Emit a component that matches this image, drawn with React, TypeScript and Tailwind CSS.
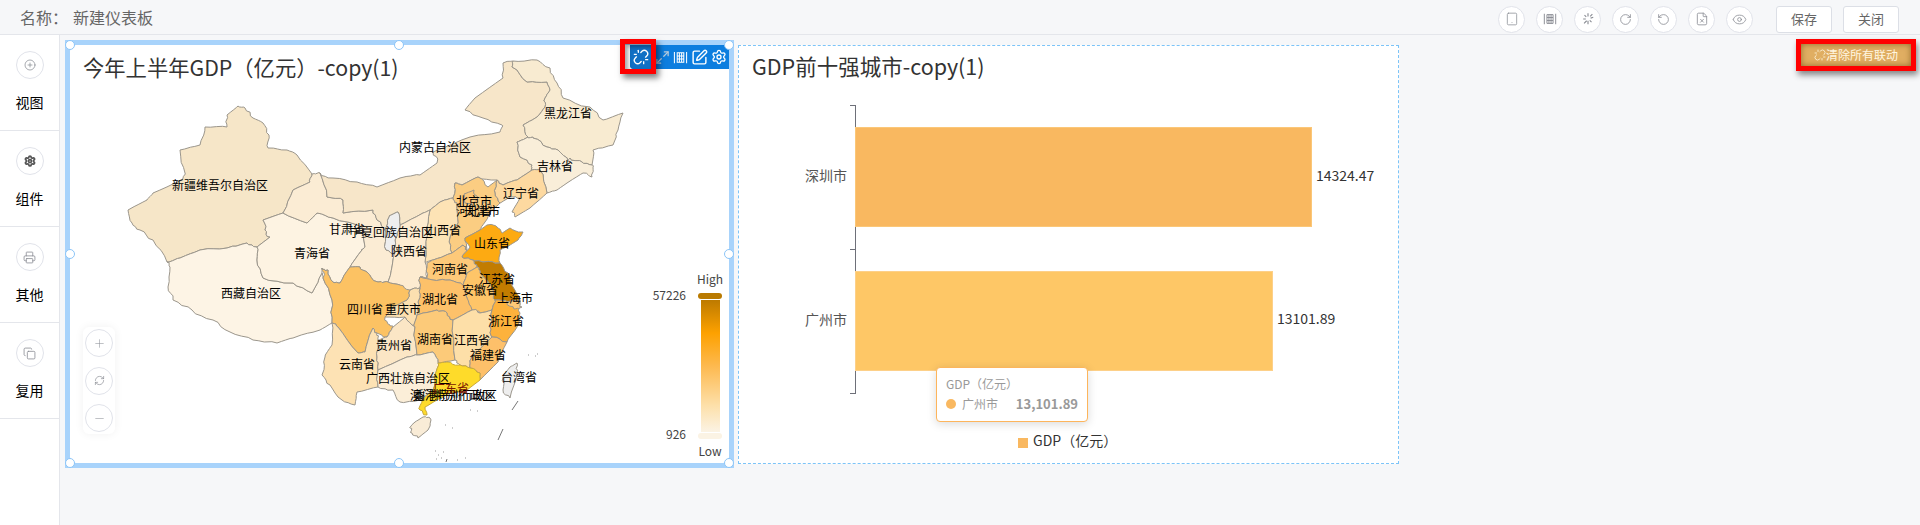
import React from 'react';
import {
  CirclePlus,
  Copy,
  Eye,
  FileX,
  Maximize2,
  Minus,
  Plus,
  Printer,
  RefreshCw,
  RotateCcw,
  RotateCw,
  Settings,
  SquarePen,
  Tablet,
  Unlink,
} from 'lucide-react';

type Region = { color: string; points: number[][]; stroke?: string };

const regions: Region[] = [
  { color: '#f6e6c8', points: [[238,106],[245,108],[253,118],[263,123],[269,135],[268,148],[287,150],[297,155],[312,174],[310,182],[293,190],[283,213],[263,220],[265,230],[270,237],[257,247],[247,243],[227,248],[200,250],[180,258],[167,262],[153,240],[140,230],[132,223],[128,210],[147,200],[153,193],[182,180],[185,173],[180,150],[200,145],[205,127],[227,127],[227,115]] },
  { color: '#fdf4e5', points: [[167,262],[180,258],[200,250],[227,248],[247,243],[257,247],[257,260],[263,278],[293,283],[312,293],[322,273],[323,278],[332,300],[332,323],[320,330],[293,338],[277,343],[253,340],[230,332],[213,320],[192,310],[173,300],[168,287],[170,267]] },
  { color: '#fdf3e2', points: [[263,220],[283,213],[307,223],[317,213],[333,218],[362,227],[365,247],[362,250],[350,267],[340,283],[333,282],[328,270],[322,268],[322,273],[312,293],[293,283],[263,278],[257,260],[257,247],[270,237],[265,230]] },
  { color: '#fbecd4', points: [[312,174],[320,173],[327,197],[343,200],[343,213],[373,210],[377,220],[386,232],[386,250],[394,255],[393,260],[388,282],[378,282],[367,272],[360,267],[350,267],[362,250],[365,247],[362,227],[333,218],[317,213],[307,223],[283,213],[293,190],[310,182]] },
  { color: '#f7e6c9', points: [[320,173],[333,178],[357,182],[377,187],[400,178],[420,175],[437,163],[433,152],[470,137],[500,132],[502,125],[483,118],[465,110],[475,98],[503,78],[503,63],[513,61],[512,67],[527,82],[547,82],[550,90],[545,98],[545,107],[537,117],[523,125],[528,137],[517,142],[520,157],[532,165],[532,170],[517,180],[503,185],[497,180],[478,177],[462,185],[455,183],[453,198],[440,202],[430,210],[423,213],[400,225],[398,212],[390,215],[386,232],[377,220],[373,210],[343,213],[343,200],[327,197]] },
  { color: '#f8ebd1', points: [[513,61],[537,60],[550,68],[557,83],[563,98],[590,107],[603,120],[623,113],[618,130],[613,145],[593,150],[592,165],[582,162],[570,158],[568,162],[558,150],[547,147],[533,138],[528,137],[523,125],[537,117],[545,107],[545,98],[550,90],[547,82],[527,82],[512,67]] },
  { color: '#f9eed9', points: [[528,137],[533,138],[547,147],[558,150],[568,162],[570,158],[582,162],[592,165],[593,167],[592,177],[583,173],[567,183],[557,190],[547,193],[540,170],[532,170],[532,165],[520,157],[517,142]] },
  { color: '#fdd9a0', points: [[540,170],[547,193],[530,208],[515,217],[512,212],[520,198],[510,197],[500,203],[495,193],[497,180],[503,185],[517,180],[532,170]] },
  { color: '#fbcd82', points: [[455,183],[462,185],[478,177],[488,187],[497,180],[495,193],[500,203],[490,212],[485,222],[480,230],[465,238],[467,250],[463,245],[452,253],[450,237],[458,223],[457,203],[453,198]] },
  { color: '#fdc878', points: [[464,194],[474,190],[478,198],[472,205],[465,203]] },
  { color: '#fdc878', points: [[483,202],[490,204],[490,212],[485,215],[481,210]] },
  { color: '#fde3b5', points: [[430,210],[440,202],[453,198],[457,203],[458,223],[450,237],[452,253],[433,260],[425,262],[428,233]] },
  { color: '#fdebd0', points: [[400,225],[423,213],[430,210],[428,233],[425,262],[427,278],[420,277],[420,288],[410,290],[407,300],[400,285],[388,282],[393,260],[394,255],[395,240]] },
  { color: '#eeeeee', points: [[390,215],[398,212],[400,225],[395,240],[394,255],[386,250],[386,232]] },
  { color: '#fdaa12', points: [[462,257],[470,247],[465,238],[480,230],[487,225],[497,227],[502,233],[510,228],[523,232],[518,240],[507,247],[500,250],[500,263],[483,262],[473,260]] },
  { color: '#c27c00', points: [[473,260],[483,262],[500,263],[508,273],[513,287],[520,300],[507,302],[495,300],[493,290],[480,273],[477,267]] },
  { color: '#fdc979', points: [[427,263],[433,260],[452,253],[463,245],[467,250],[462,257],[473,260],[477,267],[467,273],[463,285],[450,280],[433,280],[420,277],[427,278]] },
  { color: '#fec568', points: [[477,267],[480,273],[493,290],[495,300],[492,310],[480,313],[470,310],[467,298],[463,285],[467,273]] },
  { color: '#fdc16a', points: [[420,277],[433,280],[450,280],[463,285],[467,298],[472,310],[453,320],[447,313],[437,310],[417,315],[418,302],[420,288]] },
  { color: '#fce0b0', points: [[410,290],[420,288],[418,302],[417,315],[415,327],[405,317],[385,317],[393,307],[407,300]] },
  { color: '#fcc263', points: [[322,268],[328,270],[333,282],[340,283],[350,267],[360,267],[367,272],[378,282],[388,282],[400,285],[410,290],[407,300],[393,307],[385,317],[390,325],[392,328],[387,337],[377,333],[373,328],[365,352],[358,353],[338,327],[332,323],[332,300],[323,278]] },
  { color: '#fde2b4', points: [[332,323],[338,327],[358,353],[365,352],[373,328],[377,333],[378,340],[377,357],[378,370],[378,387],[357,392],[355,405],[342,400],[330,385],[322,375],[325,357],[332,345]] },
  { color: '#fbe6c5', points: [[378,340],[387,337],[392,328],[405,317],[415,327],[417,355],[407,357],[378,370],[377,357]] },
  { color: '#fcca79', points: [[417,315],[437,310],[447,313],[453,320],[455,360],[438,363],[433,352],[417,355],[415,327]] },
  { color: '#fddfa8', points: [[453,320],[472,310],[480,313],[492,310],[490,327],[492,337],[472,357],[470,368],[460,365],[455,360]] },
  { color: '#fdb23c', points: [[492,310],[495,300],[507,302],[520,300],[520,313],[517,327],[507,342],[492,337],[490,327]] },
  { color: '#fdc877', points: [[507,302],[520,300],[522,307],[514,309]] },
  { color: '#fdc06a', points: [[492,337],[507,342],[498,362],[480,380],[480,373],[470,368],[472,357]] },
  { color: '#fbeed8', points: [[378,370],[407,357],[417,355],[433,352],[438,363],[435,375],[433,390],[420,400],[400,402],[393,390],[378,387]] },
  { color: '#fedb2a', stroke: '#c9a93a', points: [[438,363],[447,362],[460,365],[470,368],[480,373],[480,380],[467,390],[450,393],[437,400],[425,407],[427,415],[420,410],[422,400],[433,390],[435,375]] },
  { color: '#f9ecd7', points: [[415,422],[423,417],[430,418],[428,430],[418,438],[412,433],[410,428]] },
  { color: '#eeeeee', points: [[510,367],[517,363],[517,373],[510,398],[503,390],[503,377]] },
];

const labels: [string, number, number][] = [
  ['新疆维吾尔自治区', 220, 184],
  ['甘肃省', 347, 228],
  ['宁夏回族自治区', 391, 231],
  ['青海省', 312, 252],
  ['西藏自治区', 251, 292],
  ['内蒙古自治区', 435, 146],
  ['黑龙江省', 568, 112],
  ['吉林省', 555, 165],
  ['辽宁省', 521, 192],
  ['北京市', 474, 200],
  ['河北省', 474, 210],
  ['天津市', 482, 210],
  ['山西省', 443, 229],
  ['陕西省', 409, 250],
  ['山东省', 492, 242],
  ['河南省', 450, 268],
  ['江苏省', 497, 278],
  ['安徽省', 480, 289],
  ['上海市', 515, 297],
  ['湖北省', 440, 298],
  ['四川省', 365, 308],
  ['重庆市', 403, 308],
  ['浙江省', 506, 320],
  ['湖南省', 435, 338],
  ['江西省', 472, 339],
  ['贵州省', 394, 344],
  ['福建省', 488, 354],
  ['云南省', 357, 363],
  ['广西壮族自治区', 408, 377],
  ['台湾省', 519, 376],
  ['澳门特别行政区', 452, 394],
  ['香港特别行政区', 455, 394],
];

// rough coastline look: midpoint noise keyed on position, so shared borders stay shared
const wobble = (a: number[], b: number[], depth: number): number[][] => {
  if (depth === 0) return [a];
  const mx = (a[0] + b[0]) / 2;
  const my = (a[1] + b[1]) / 2;
  const h = Math.sin(mx * 12.9898 + my * 78.233) * 43758.5453;
  const n = (h - Math.floor(h) - 0.5) * 2.6;
  const m = [mx + n, my - n * 0.7];
  return [...wobble(a, m, depth - 1), ...wobble(m, b, depth - 1)];
};

const toPath = (points: number[][]) =>
  points
    .flatMap((p, i) => wobble(p, points[(i + 1) % points.length], 2))
    .map((p) => `${p[0].toFixed(1)},${p[1].toFixed(1)}`)
    .join(' ');

const CircleIcon = ({ children, className = 'w-7 h-7' }: { children: React.ReactNode; className?: string }) => (
  <div className={`${className} flex items-center justify-center rounded-full border border-[#e1e3ea] bg-white text-[#8a8d94]`}>
    {children}
  </div>
);

const GridIcon = ({ size = 14 }: { size?: number }) => (
  <svg width={size} height={size} viewBox="0 0 16 16" stroke="currentColor" strokeWidth="1.1" fill="none">
    <path d="M1.5 2v12M14.5 2v12M4.5 3h7v10h-7zM4.5 6.3h7M4.5 9.7h7M6.8 3v10M9.2 3v10" />
  </svg>
);

const BurstIcon = () => (
  <svg width="14" height="14" viewBox="0 0 16 16" stroke="currentColor" strokeWidth="1.3" fill="none">
    <path d="M8 1.5v3.5M8 10v4M2.5 8h3M11 7l3-1M4 3.5l2 2M12 11.5l-2-2M3.5 13l3-3M10.5 5l2.5-2.5" />
  </svg>
);

const sideItems = [
  { label: '视图', icon: <CirclePlus size={12} strokeWidth={1.5} /> },
  { label: '组件', icon: <Settings size={12} strokeWidth={3.5} className="text-[#555]" /> },
  { label: '其他', icon: <Printer size={13} strokeWidth={1.5} /> },
  { label: '复用', icon: <Copy size={13} strokeWidth={1.5} /> },
];

const Handle = ({ className }: { className: string }) => (
  <span className={`absolute z-20 h-2.5 w-2.5 rounded-full border border-[#8cc5f8] bg-white ${className}`} />
);

const ChinaMap = () => (
  <svg className="absolute inset-0" width="659" height="418" viewBox="70 45 659 418">
    {regions.map((r, i) => (
      <polygon key={i} points={toPath(r.points)} fill={r.color} stroke={r.stroke ?? '#9b968c'} strokeWidth="1" strokeLinejoin="round" />
    ))}
    <path d="M512 410l6-9M498 440l5-11M446 462l1-3" stroke="#777" strokeWidth="1" />
    <path d="M528 355h1M535 356h1M537 354h1M470 410h1M477 411h1M445 425h1M452 428h1M435 451h1M438 455h1M441 458h1M436 459h1M443 452h1M457 460h1M465 458h1" stroke="#999" strokeWidth="1" />
    <g fontSize="12" fill="#000" textAnchor="middle" dominantBaseline="central">
      {labels.map(([t, x, y]) => (
        <text key={t} x={x} y={y}>{t}</text>
      ))}
      <text x="451" y="387" fill="#7a1500">广东省</text>
    </g>
  </svg>
);

const MapLegend = () => (
  <>
    <span className="absolute left-[617px] top-[226px] w-[46px] text-center text-xs leading-4 text-[#444]">High</span>
    <span className="absolute right-[43px] top-[242px] text-xs leading-4 text-[#444]">57226</span>
    <div className="absolute left-[628px] top-[248px] h-[6px] w-6 rounded-full bg-[#b97a00]" />
    <div className="absolute left-[631px] top-[255px] h-[132px] w-[19px] bg-[linear-gradient(to_bottom,#bd7a00,#fda100_25%,#fdb94f_50%,#fde0aa_80%,#fbf3e4)]" />
    <div className="absolute left-[628px] top-[388px] h-[6px] w-6 rounded-full bg-[#fbf3e4]" />
    <span className="absolute right-[43px] top-[381px] text-xs leading-4 text-[#444]">926</span>
    <span className="absolute left-[617px] top-[398px] w-[46px] text-center text-xs leading-4 text-[#444]">Low</span>
  </>
);

const BarChart = () => (
  <svg className="absolute inset-0" width="659" height="417" viewBox="739 46 659 417">
    <path d="M850 105.5h5M850 249.5h5M850 393.5h5M855.5 105v289" stroke="#6e7079" strokeWidth="1" fill="none" />
    <rect x="855.5" y="127.5" width="456" height="99" fill="#f9b860" stroke="#fbc778" />
    <rect x="855.5" y="271.5" width="417" height="99" fill="#fec766" stroke="#fdd089" />
    <g fontSize="14" dominantBaseline="central">
      <text x="847" y="175" textAnchor="end" fill="#555">深圳市</text>
      <text x="847" y="319" textAnchor="end" fill="#555">广州市</text>
      <text x="1316" y="175" fill="#333">14324.47</text>
      <text x="1277" y="318" fill="#333">13101.89</text>
    </g>
    <rect x="1018" y="438" width="10" height="10" fill="#f9b860" />
    <text x="1033" y="440" fontSize="14" fill="#333" dominantBaseline="central">GDP（亿元）</text>
  </svg>
);

export default function App() {
  return (
    <div className="flex h-[525px] flex-col overflow-hidden bg-[#f6f7f9] [font-family:'Noto_Sans_CJK_SC','Noto_Sans',sans-serif]">
      <header className="flex h-[35px] shrink-0 items-center border-b border-[#e4e6eb] pl-5 pr-[21px]">
        <span className="text-base text-[#666]">名称：<span className="ml-[5px]">新建仪表板</span></span>
        <div className="ml-auto flex items-center gap-[11px] pt-[4px]">
          <CircleIcon className="w-[27px] h-[27px]"><Tablet size={14} strokeWidth={1.3} /></CircleIcon>
          <CircleIcon className="w-[27px] h-[27px]"><GridIcon /></CircleIcon>
          <CircleIcon className="w-[27px] h-[27px]"><BurstIcon /></CircleIcon>
          <CircleIcon className="w-[27px] h-[27px]"><RotateCw size={13} strokeWidth={1.5} /></CircleIcon>
          <CircleIcon className="w-[27px] h-[27px]"><RotateCcw size={13} strokeWidth={1.5} /></CircleIcon>
          <CircleIcon className="w-[27px] h-[27px]"><FileX size={14} strokeWidth={1.4} /></CircleIcon>
          <CircleIcon className="w-[27px] h-[27px]"><Eye size={15} strokeWidth={1.3} /></CircleIcon>
          <button className="ml-[12px] h-[27px] w-[56px] rounded-[3px] border border-[#dcdfe6] bg-white text-[13px] text-[#666]">保存</button>
          <button className="h-[27px] w-[56px] rounded-[3px] border border-[#dcdfe6] bg-white text-[13px] text-[#666]">关闭</button>
        </div>
      </header>

      <div className="relative flex min-h-0 flex-1">
        <aside className="w-[60px] shrink-0 border-r border-[#e4e6eb] bg-white">
          {sideItems.map((item) => (
            <div key={item.label} className="flex h-[96px] flex-col items-center border-b border-[#e4e6eb] pt-[16px]">
              <CircleIcon>{item.icon}</CircleIcon>
              <span className="mt-[13px] text-sm leading-5 text-black">{item.label}</span>
            </div>
          ))}
        </aside>

        <main className="flex items-start pl-[5px] pt-[5px]">
          {/* selected chart */}
          <div className="h-[428px] w-[669px] bg-[#a8d3fb] p-[5px]">
            <div className="relative h-[418px] w-[659px] rounded-md bg-white">
              <Handle className="left-[-5px] top-[-5px]" />
              <Handle className="left-[324px] top-[-5px]" />
              <Handle className="right-[-5px] top-[-5px]" />
              <Handle className="left-[-5px] top-[204px]" />
              <Handle className="right-[-5px] top-[204px]" />
              <Handle className="left-[-5px] bottom-[-5px]" />
              <Handle className="left-[324px] bottom-[-5px]" />
              <Handle className="right-[-5px] bottom-[-5px]" />

              <ChinaMap />
              <h2 className="relative pl-[13px] pt-[8px] text-[21.3px] leading-7 text-[#333]">今年上半年GDP（亿元）-copy(1)</h2>

              <div className="absolute right-0 top-0 z-10 flex h-6 w-[99px] items-center rounded-tr rounded-bl bg-[#0d7edf] text-white">
                <div className="relative flex h-6 w-[22px] items-center justify-center rounded-bl bg-[#1170c4]">
                  <Unlink size={16} strokeWidth={2} />
                  <span className="absolute bottom-[-5px] left-[-10px] right-[-4px] top-[-6px] border-[5px] border-[#f00] shadow-[3px_4px_6px_rgba(0,0,0,0.5),inset_3px_3px_4px_rgba(0,0,0,0.35)]" />
                </div>
                <div className="ml-[1px] flex flex-1 items-center justify-around pr-[1px]">
                  <Maximize2 size={15} strokeWidth={2} className="text-[#b9ccdc]" />
                  <GridIcon size={15} />
                  <SquarePen size={17} strokeWidth={2} />
                  <Settings size={16} strokeWidth={2} />
                </div>
              </div>

              <div className="absolute left-[13px] top-[282px] z-10 flex h-[107px] w-[32px] flex-col items-center justify-between rounded-md bg-white py-[2px] shadow-[0_0_10px_rgba(0,0,0,0.06)]">
                <CircleIcon><Plus size={13} strokeWidth={1} /></CircleIcon>
                <CircleIcon><RefreshCw size={11} strokeWidth={1.5} /></CircleIcon>
                <CircleIcon><Minus size={13} strokeWidth={1} /></CircleIcon>
              </div>

              <MapLegend />
            </div>
          </div>

          {/* second chart */}
          <div className="relative ml-[4px] mt-[5px] h-[419px] w-[661px] border border-dashed border-[#7cc4f8] bg-white">
            <BarChart />
            <h2 className="relative pl-[13px] pt-[6px] text-[21.5px] leading-7 text-[#333]">GDP前十强城市-copy(1)</h2>
            <div className="absolute left-[197px] top-[321px] h-[55px] w-[152px] rounded border border-[#fdb55c] bg-white px-[9px] pt-[6px] shadow-[0_2px_10px_rgba(0,0,0,0.15)]">
              <div className="text-xs leading-[20px] text-[#999]">GDP（亿元）</div>
              <div className="flex items-center text-xs leading-[20px] text-[#999]">
                <span className="mr-[6px] h-2.5 w-2.5 rounded-full bg-[#f9b860]" />
                <span>广州市</span>
                <b className="ml-auto text-[13px] font-bold">13,101.89</b>
              </div>
            </div>
          </div>
        </main>

        <button className="absolute right-[4px] top-[4px] flex h-[32px] w-[120px] items-center justify-center border-[5px] border-[#f00] bg-[#e0ae62] text-xs text-[#fff6e0] shadow-[2px_4px_6px_rgba(0,0,0,0.45),inset_0_0_6px_rgba(90,60,10,0.6)]">
          <Unlink size={12} strokeWidth={1.6} />
          清除所有联动
        </button>
      </div>
    </div>
  );
}
